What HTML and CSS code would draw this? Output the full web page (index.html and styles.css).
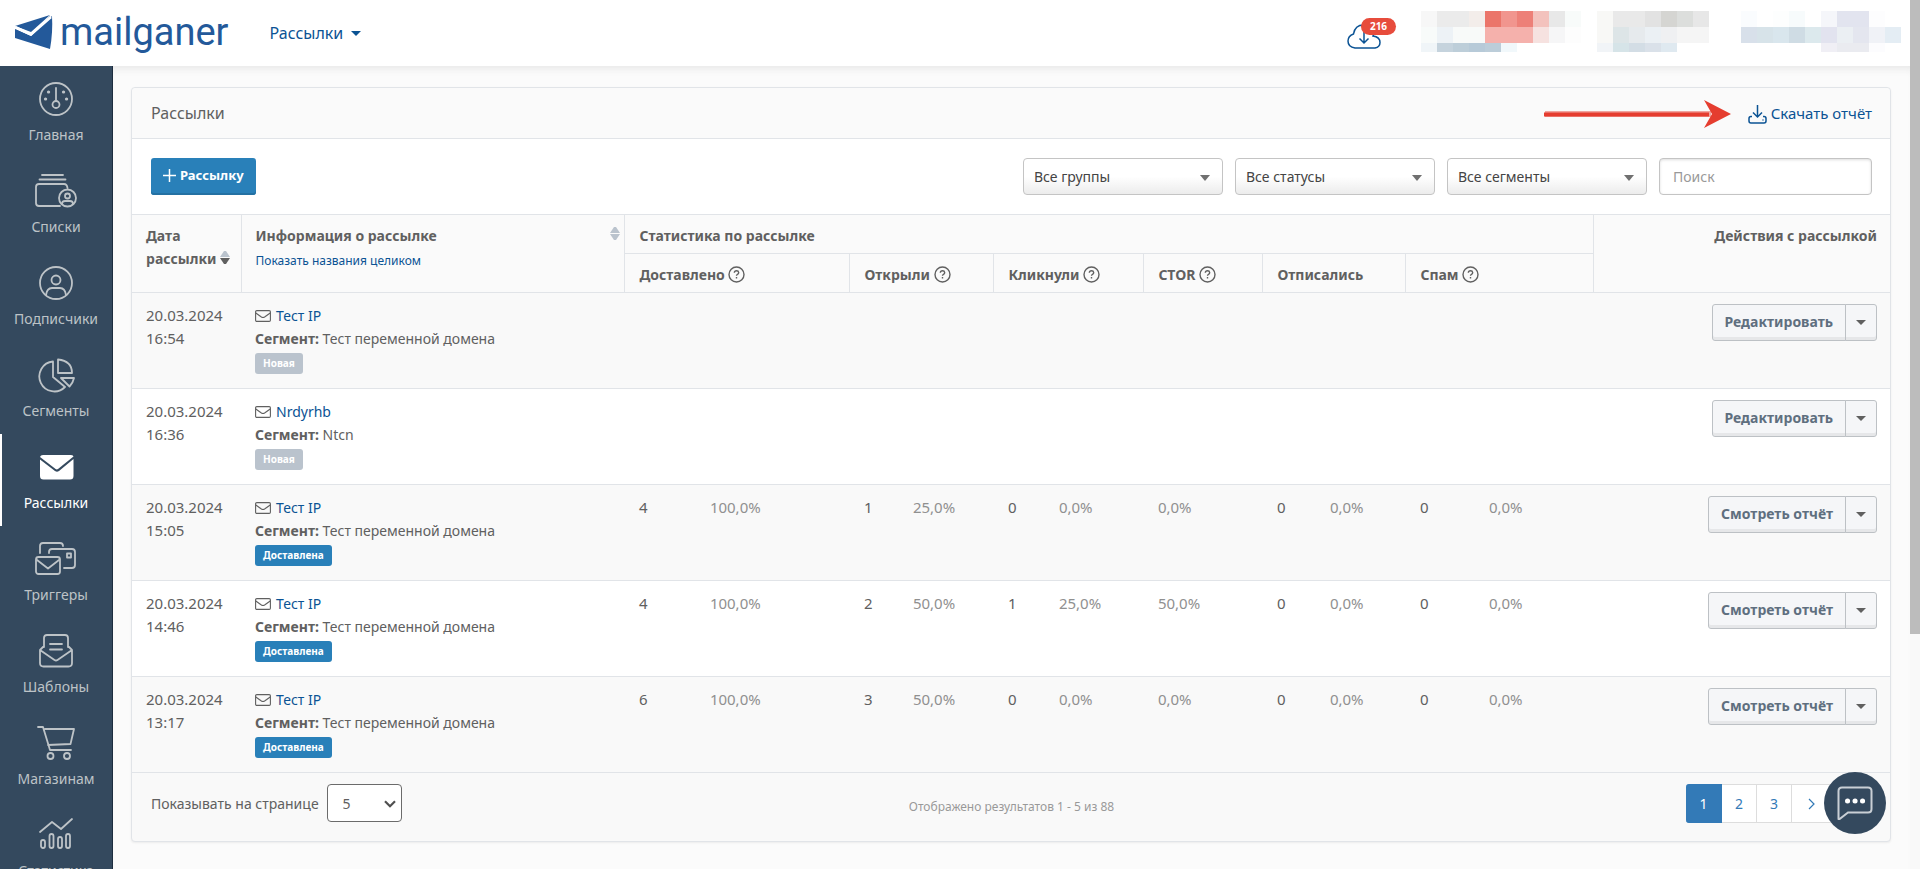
FILE: index.html
```html
<!DOCTYPE html>
<html lang="ru">
<head>
<meta charset="utf-8">
<title>Рассылки — mailganer</title>
<link rel="stylesheet" href="styles.css">
</head>
<body>
<svg class="sprite" aria-hidden="true">
  <symbol id="i-mail" viewBox="0 0 16 12"><rect x=".6" y=".6" width="14.8" height="10.8" rx="1.2"/><path d="M.8 3l5.600 4q1.600 1 3.200 0L15.200 3"/></symbol>
  <symbol id="i-help" viewBox="0 0 17 17"><circle cx="8.500" cy="8.500" r="7.500"/><path d="M6.300 6.700q.2-2 2.200-2t2.200 1.800q0 1.200-1.200 1.800-1 .5-1 1.500M8.500 11v1.500"/></symbol>
  <symbol id="i-caret" viewBox="0 0 10 5"><path d="M0 0h10L5 5z"/></symbol>
</svg>
<div class="page">
  <header class="topbar">
    <a class="logo" href="#">
      <svg class="logo-mark" viewBox="0 0 38 34"><path fill="#23599a" d="M0 11L35 0 16 17z"/><path fill="#1b4376" d="M0 14l16 8L35 1l1 6-19 21z"/><path fill="#23599a" d="M0 14l16 7L37 1q1 16-2 33L0 23z"/><path fill="none" stroke="#fff" stroke-width="2.500" d="M0 12l16 7.500L36 2"/></svg>
      <span>mailganer</span>
    </a>
    <button class="nav-menu" type="button">Рассылки <svg><use href="#i-caret"/></svg></button>
    <div class="top-right">
      <a class="downloads" href="#" aria-label="Загрузки">
        <svg viewBox="0 0 34 26"><path d="M8 24q-7-1-7-7 0-5 5.500-7Q8 1 16.500 1q8 0 10 8 0 2-.5 3 7 1 7 6.500 0 4.500-5 5.500zM17 8v11M12.500 14.500L17 19l4.500-4.500"/></svg>
        <span class="count">216</span>
      </a>
      <svg class="mosaic mosaic-a" viewBox="0 0 160 41" shape-rendering="crispEdges"><path fill="#f7f7f7" d="M0 0h16v16H0z"/><path fill="#ebebeb" d="M16 0h32v16H16z"/><path fill="#f3edea" d="M48 0h16v16H48z"/><path fill="#eb756a" d="M64 0h16v16H64z"/><path fill="#f1958e" d="M80 0h16v16H80z"/><path fill="#ed8078" d="M96 0h16v16H96z"/><path fill="#f3c2bd" d="M112 0h16v16h-16z"/><path fill="#e8e8e8" d="M128 0h16v16h-16z"/><path fill="#f8fbfa" d="M144 0h16v16h-16zM0 16h16v16H0z"/><path fill="#edf2f6" d="M16 16h16v16H16z"/><path fill="#f8faf9" d="M32 16h32v16H32z"/><path fill="#f5b1ac" d="M64 16h48v16H64z"/><path fill="#f6e2e0" d="M112 16h16v16h-16z"/><path fill="#f6f6f7" d="M128 16h16v16h-16z"/><path fill="#fdfdfd" d="M144 16h16v16h-16z"/><path fill="#f0f5f8" d="M0 32h16v9H0z"/><path fill="#c5d3dd" d="M16 32h16v9H16z"/><path fill="#bdced9" d="M32 32h16v9H32z"/><path fill="#b7cad8" d="M48 32h16v9H48z"/><path fill="#bccdd9" d="M64 32h16v9H64z"/><path fill="#f1f8fb" d="M80 32h16v9H80z"/></svg>
      <svg class="mosaic mosaic-b" viewBox="0 0 112 41" shape-rendering="crispEdges"><path fill="#f8f8f6" d="M0 0h16v32H0z"/><path fill="#e9e9e9" d="M16 0h32v16H16z"/><path fill="#e2e2e2" d="M48 0h16v16H48z"/><path fill="#d5d5d2" d="M64 0h16v16H64z"/><path fill="#dcdedc" d="M80 0h16v16H80z"/><path fill="#e7e7e7" d="M96 0h16v16H96z"/><path fill="#dde5e7" d="M16 16h16v16H16z"/><path fill="#e6eaed" d="M32 16h16v16H32z"/><path fill="#ebf0f4" d="M48 16h16v16H48z"/><path fill="#eff0f2" d="M64 16h16v16H64z"/><path fill="#f5f5f5" d="M80 16h32v16H80z"/><path fill="#f1f4f7" d="M0 32h16v9H0z"/><path fill="#d6e4e8" d="M16 32h16v9H16z"/><path fill="#d3dde5" d="M32 32h16v9H32z"/><path fill="#dae1e9" d="M48 32h16v9H48z"/><path fill="#dfe9f0" d="M64 32h16v9H64z"/></svg>
      <svg class="mosaic mosaic-c" viewBox="0 0 160 41" shape-rendering="crispEdges"><path fill="#fafcfe" d="M0 0h16v16H0z"/><path fill="#fdfefe" d="M32 0h16v16H32z"/><path fill="#f7fbfc" d="M48 0h16v16H48z"/><path fill="#f5f6fa" d="M80 0h16v16H80z"/><path fill="#e2e4ef" d="M96 0h32v16H96z"/><path fill="#fdfdfe" d="M128 0h16v16h-16z"/><path fill="#d8e0ea" d="M0 16h16v16H0z"/><path fill="#d7e3e9" d="M16 16h16v16H16z"/><path fill="#d9e6ed" d="M32 16h16v16H32z"/><path fill="#cfdce4" d="M48 16h16v16H48z"/><path fill="#dce9ed" d="M64 16h16v16H64z"/><path fill="#e2e3ef" d="M80 16h16v16H80z"/><path fill="#ebeff3" d="M96 16h16v16H96z"/><path fill="#e4e6ef" d="M112 16h16v16h-16z"/><path fill="#f0f2f7" d="M128 16h16v16h-16z"/><path fill="#e4edf4" d="M144 16h16v16h-16z"/><path fill="#f0eff5" d="M80 32h16v9H80z"/><path fill="#eaebf0" d="M96 32h32v9H96z"/><path fill="#fcfcfe" d="M128 32h16v9h-16z"/></svg>
    </div>
  </header>
  <div class="body">
    <nav class="sidebar">
      <a class="side-item" href="#"><svg viewBox="0 0 42 36"><circle cx="21" cy="18" r="16"/><path d="M21 7v12"/><circle cx="21" cy="23.500" r="3.500"/><path class="dot" d="M13.500 11h.1M28.500 11h.1M10.500 18h.1M31.500 18h.1"/></svg>Главная</a>
      <a class="side-item" href="#"><svg viewBox="0 0 42 36"><path d="M7 2h21M4.500 6.500h26M25 33H4q-3 0-3-3V14q0-3 3-3h25q3 0 3.500 4"/><circle cx="32.500" cy="25" r="8.500"/><circle cx="32.500" cy="23" r="2.500"/><path d="M27 31q0-3 3-3h5q3 0 3 3"/></svg>Списки</a>
      <a class="side-item" href="#"><svg viewBox="0 0 42 36"><circle cx="21" cy="18" r="16"/><circle cx="21" cy="15" r="4.500"/><path d="M11 30q1-7 6-7h8q5 0 6 7"/></svg>Подписчики</a>
      <a class="side-item" href="#"><svg viewBox="0 0 42 36"><path d="M18 4.500A15 15 0 1 0 30 30L18 20zM23 2.500V16h14Q37 4 23 2.500zM26 21h13q-1 5-4.500 8.500z"/></svg>Сегменты</a>
      <a class="side-item active" href="#"><svg viewBox="0 0 42 36"><path class="solid" d="M8 6h28q2.500 0 2.500 1.500L23 20q-1.200.8-2.400 0L5 8q.5-2 3-2z"/><path class="solid" d="M5 10.500L20 22q2 1.500 4 0L38.500 10v17q0 3.500-3.500 3.500H8.500Q5 30.500 5 27z"/></svg>Рассылки</a>
      <a class="side-item" href="#"><svg viewBox="0 0 42 36"><rect x="1" y="16" width="24" height="17" rx="2.500"/><path d="M2 19l11 8.500L24 19M5 12V5q0-3 3-3h17q3 0 3 3M14 12v-1q0-3 3-3h20q3 0 3 3v13q0 3-3 3h-8M32 12.500h4v4h-4z"/></svg>Триггеры</a>
      <a class="side-item" href="#"><svg viewBox="0 0 42 36"><path d="M9 14V5q0-3 3-3h18q3 0 3 3v9M15 11h12M15 16.500h12M5 17v13q0 3.500 3.500 3.500h25q3.500 0 3.500-3.500V17L22.500 27q-1.500 1-3 0zM5 17l4-4M37 17l-4-4"/></svg>Шаблоны</a>
      <a class="side-item" href="#"><svg viewBox="0 0 42 36"><path d="M3 2h5l7 23h21M10 4h29l-3.500 15L13 20"/><circle cx="15.500" cy="31" r="3"/><circle cx="32" cy="31" r="3"/></svg>Магазинам</a>
      <a class="side-item" href="#"><svg viewBox="0 0 42 36"><path d="M5 15L17 5l9 7L37 2"/><rect x="6" y="23" width="4" height="8" rx="2"/><rect x="14.500" y="17" width="4" height="14" rx="2"/><rect x="23" y="20" width="4" height="11" rx="2"/><rect x="31" y="17" width="4" height="14" rx="2"/></svg>Статистика</a>
    </nav>
    <main class="content">
      <section class="panel">
        <div class="panel-head">
          <h1>Рассылки</h1>
          <svg class="pointer" viewBox="0 0 188 30"><path fill="#f0a49e" d="M2 12h166v6H2z"/><path fill="#e53d2f" d="M1 13.500h165v4H1z"/><path fill="#e53d2f" d="M161 1l27 14-27 14 8-14z"/></svg>
          <a class="report-link" href="#"><svg viewBox="0 0 19 20"><path d="M9.500 1v12M5 8.500L9.500 13 14 8.500M4 12.500H3q-2 0-2 2V17q0 2 2 2h13q2 0 2-2v-2.500q0-2-2-2h-1M14.500 16h1"/></svg>Скачать отчёт</a>
        </div>
        <div class="toolbar">
          <button class="btn-primary" type="button"><svg viewBox="0 0 13 13"><path d="M6.500 0v13M0 6.500h13"/></svg>Рассылку</button>
          <div class="filters">
            <span class="select-box"><select aria-label="Группы"><option>Все группы</option></select></span>
            <span class="select-box"><select aria-label="Статусы"><option>Все статусы</option></select></span>
            <span class="select-box"><select aria-label="Сегменты"><option>Все сегменты</option></select></span>
            <input class="search" type="text" placeholder="Поиск" aria-label="Поиск">
          </div>
        </div>
        <table class="grid">
          <colgroup><col class="c-date"><col><col class="c-dn"><col class="c-dp"><col class="c-on"><col class="c-op"><col class="c-cn"><col class="c-cp"><col class="c-ctor"><col class="c-un"><col class="c-up"><col class="c-sn"><col class="c-sp"><col class="c-act"></colgroup>
          <thead>
            <tr>
              <th rowspan="2">Дата рассылки <svg class="sort desc" viewBox="0 0 10 13"><path class="up" d="M0 6L4 0h2l4 6z"/><path class="down" d="M0 7h10l-4 6H4z"/></svg></th>
              <th rowspan="2"><div class="th-info"><span>Информация о рассылке</span><svg class="sort" viewBox="0 0 10 13"><path class="up" d="M0 6L4 0h2l4 6z"/><path class="down" d="M0 7h10l-4 6H4z"/></svg></div><a class="small-link" href="#">Показать названия целиком</a></th>
              <th colspan="11">Статистика по рассылке</th>
              <th rowspan="2" class="right">Действия с рассылкой</th>
            </tr>
            <tr>
              <th colspan="2">Доставлено <svg class="help"><use href="#i-help"/></svg></th>
              <th colspan="2">Открыли <svg class="help"><use href="#i-help"/></svg></th>
              <th colspan="2">Кликнули <svg class="help"><use href="#i-help"/></svg></th>
              <th>CTOR <svg class="help"><use href="#i-help"/></svg></th>
              <th colspan="2">Отписались</th>
              <th colspan="2">Спам <svg class="help"><use href="#i-help"/></svg></th>
            </tr>
          </thead>
          <tbody>
            <tr>
              <td>20.03.2024 16:54</td>
              <td class="info"><svg class="mail"><use href="#i-mail"/></svg><a href="#">Тест IP</a><div><b>Сегмент:</b> Тест переменной домена</div><span class="tag">Новая</span></td>
              <td></td><td></td><td></td><td></td><td></td><td></td><td></td><td></td><td></td><td></td><td></td>
              <td class="right"><div class="split"><button type="button">Редактировать</button><button type="button" aria-label="Ещё"><svg><use href="#i-caret"/></svg></button></div></td>
            </tr>
            <tr>
              <td>20.03.2024 16:36</td>
              <td class="info"><svg class="mail"><use href="#i-mail"/></svg><a href="#">Nrdyrhb</a><div><b>Сегмент:</b> Ntcn</div><span class="tag">Новая</span></td>
              <td></td><td></td><td></td><td></td><td></td><td></td><td></td><td></td><td></td><td></td><td></td>
              <td class="right"><div class="split"><button type="button">Редактировать</button><button type="button" aria-label="Ещё"><svg><use href="#i-caret"/></svg></button></div></td>
            </tr>
            <tr>
              <td>20.03.2024 15:05</td>
              <td class="info"><svg class="mail"><use href="#i-mail"/></svg><a href="#">Тест IP</a><div><b>Сегмент:</b> Тест переменной домена</div><span class="tag done">Доставлена</span></td>
              <td>4</td><td class="pct">100,0%</td><td>1</td><td class="pct">25,0%</td><td>0</td><td class="pct">0,0%</td><td class="pct">0,0%</td><td>0</td><td class="pct">0,0%</td><td>0</td><td class="pct">0,0%</td>
              <td class="right"><div class="split"><button type="button">Смотреть отчёт</button><button type="button" aria-label="Ещё"><svg><use href="#i-caret"/></svg></button></div></td>
            </tr>
            <tr>
              <td>20.03.2024 14:46</td>
              <td class="info"><svg class="mail"><use href="#i-mail"/></svg><a href="#">Тест IP</a><div><b>Сегмент:</b> Тест переменной домена</div><span class="tag done">Доставлена</span></td>
              <td>4</td><td class="pct">100,0%</td><td>2</td><td class="pct">50,0%</td><td>1</td><td class="pct">25,0%</td><td class="pct">50,0%</td><td>0</td><td class="pct">0,0%</td><td>0</td><td class="pct">0,0%</td>
              <td class="right"><div class="split"><button type="button">Смотреть отчёт</button><button type="button" aria-label="Ещё"><svg><use href="#i-caret"/></svg></button></div></td>
            </tr>
            <tr>
              <td>20.03.2024 13:17</td>
              <td class="info"><svg class="mail"><use href="#i-mail"/></svg><a href="#">Тест IP</a><div><b>Сегмент:</b> Тест переменной домена</div><span class="tag done">Доставлена</span></td>
              <td>6</td><td class="pct">100,0%</td><td>3</td><td class="pct">50,0%</td><td>0</td><td class="pct">0,0%</td><td class="pct">0,0%</td><td>0</td><td class="pct">0,0%</td><td>0</td><td class="pct">0,0%</td>
              <td class="right"><div class="split"><button type="button">Смотреть отчёт</button><button type="button" aria-label="Ещё"><svg><use href="#i-caret"/></svg></button></div></td>
            </tr>
          </tbody>
        </table>
        <footer class="panel-foot">
          <div class="per-page"><label for="per-page">Показывать на странице</label><span class="per-box"><select id="per-page"><option>5</option></select><svg viewBox="0 0 12 8"><path d="M1 1.200l5 5 5-5"/></svg></span></div>
          <p class="summary">Отображено результатов 1 - 5 из 88</p>
          <nav class="pager" aria-label="Страницы"><a class="current" href="#">1</a><a href="#">2</a><a href="#">3</a><a class="wide" href="#" aria-label="Следующая"><svg viewBox="0 0 7 12"><path d="M1 1l5 5-5 5"/></svg></a><a class="wide" href="#" aria-label="Последняя"></a></nav>
        </footer>
      </section>
    </main>
  </div>
</div>
<div class="scrollbar" aria-hidden="true"></div>
<button class="chat" type="button" aria-label="Чат"><svg viewBox="0 0 36 34"><path d="M5 1.500h26q3.500 0 3.500 3.500v18q0 3.500-3.500 3.500H11L2 33.500q-.5 0-.5-1V5q0-3.500 3.500-3.500z"/><path class="dots" d="M10.500 15h.1M18 15h.1M25.500 15h.1"/></svg></button>
</body>
</html>
```
FILE: styles.css
```css
* { box-sizing: border-box; }
html, body { height: 100%; }
body {
  margin: 0;
  display: flex;
  overflow: hidden;
  background: #fbfbfb;
  color: #606060;
  font: 15px/23px "Noto Sans", sans-serif;
}
button, input, select { font: inherit; color: inherit; margin: 0; }
a { color: #0b5394; text-decoration: none; }
svg { flex: none; }
.sprite { position: absolute; width: 0; height: 0; }

.page { flex: 1; min-width: 0; display: flex; flex-direction: column; }

.topbar {
  position: relative;
  z-index: 1;
  flex: none;
  display: flex;
  height: 66px;
  padding-left: 15px;
  background: #fff;
}
.logo { display: flex; gap: 7px; align-items: center; height: 64px; color: #23599a; font: 38px/48px Roboto, sans-serif; }
.logo-mark { width: 38px; height: 34px; }
.nav-menu {
  display: flex;
  gap: 8px;
  align-items: center;
  margin-left: 41px;
  padding: 0;
  border: 0;
  background: none;
  color: #0b5394;
  font-size: 16px;
}
.nav-menu svg { width: 10px; height: 5px; fill: #0b5394; }
.top-right { display: flex; margin-left: auto; padding-right: 9px; }
.downloads { position: relative; margin: 24px 40px 0 0; }
.downloads svg { display: block; width: 34px; height: 26px; fill: none; stroke: #0b5394; stroke-width: 1.5; }
.count {
  position: absolute;
  left: 14px;
  top: -6px;
  width: 35px;
  border-radius: 9px;
  background: #e74c3c;
  color: #fff;
  font-size: 10px;
  font-weight: bold;
  line-height: 17px;
  text-align: center;
}
.mosaic { height: 41px; margin-top: 11px; }
.mosaic-a, .mosaic-c { width: 160px; }
.mosaic-b { width: 112px; margin: 11px 32px 0 16px; }

.body { flex: 1; min-height: 0; display: flex; }
.sidebar {
  flex: none;
  width: 113px;
  overflow: hidden;
  position: relative;
  z-index: 2;
  background: #34495e;
  border-right: 1px solid #1d2d3f;
}
.side-item {
  display: flex;
  flex-direction: column;
  align-items: center;
  gap: 8px;
  height: 92px;
  padding-top: 15px;
  color: #bdc3c7;
  font-size: 14px;
  line-height: 20px;
}
.side-item svg { width: 42px; height: 36px; fill: none; stroke: #bdc3c7; stroke-width: 1.8; stroke-linecap: round; stroke-linejoin: round; }
.side-item .dot { stroke-width: 3.2; }
.side-item .solid { fill: #fff; stroke: none; }
.side-item.active { color: #fff; box-shadow: inset 2px 0 #fff; }

.content { flex: 1; min-width: 0; padding: 21px 19px 0 18px; box-shadow: inset 0 8px 8px -6px #e4e4e4; }
.panel { border: 1px solid #e1e4e8; border-radius: 4px; background: #f9f9f9; box-shadow: 0 1px 2px #ececec; }
.panel-head { display: flex; align-items: center; height: 51px; padding: 1px 18px 0 19px; border-bottom: 1px solid #e1e4e8; background: #fafafa; border-radius: 4px 4px 0 0; }
.panel-head h1 { margin: 0; font-size: 16px; font-weight: normal; }
.pointer { width: 188px; height: 30px; margin: 0 17px 0 auto; }
.report-link { display: flex; gap: 4px; align-items: center; }
.report-link svg { width: 19px; height: 20px; fill: none; stroke: #0b5394; stroke-width: 1.5; }
.toolbar { display: flex; justify-content: space-between; padding: 19px 18px 19px 19px; background: #fff; }
.btn-primary {
  display: flex;
  gap: 4px;
  align-items: center;
  height: 37px;
  padding: 0 12px 2px;
  border: 0;
  border-radius: 3px;
  background: #2980b9;
  box-shadow: inset 0 -2px #2471a3;
  color: #fff;
  font-size: 13px;
  font-weight: bold;
}
.btn-primary svg { width: 13px; height: 13px; stroke: #fff; stroke-width: 1.5; }
.filters { display: flex; gap: 12px; font-size: 14px; }
.select-box { position: relative; display: block; width: 200px; }
.select-box select, .search {
  width: 100%;
  height: 37px;
  padding: 0 10px;
  border: 1px solid #c4c4c4;
  border-radius: 4px;
  color: #444;
}
.select-box select { appearance: none; background: linear-gradient(#fff 50%, #ececec); }
.select-box::after {
  content: "";
  position: absolute;
  right: 13px;
  top: 17px;
  border: 5px solid transparent;
  border-top: 6px solid #707070;
  border-bottom: 0;
}
.filters .search { width: 213px; padding: 0 13px; background: #fff; box-shadow: inset 0 1px 3px #ddd; }
.search::placeholder { color: #999; opacity: 1; }

.grid { width: 100%; table-layout: fixed; border-collapse: collapse; }
.c-date { width: 109px; }
.c-dn { width: 71px; } .c-dp { width: 154px; }
.c-on { width: 49px; } .c-op { width: 95px; }
.c-cn { width: 51px; } .c-cp { width: 99px; }
.c-ctor { width: 119px; }
.c-un { width: 53px; } .c-up { width: 90px; }
.c-sn { width: 69px; } .c-sp { width: 118px; }
.c-act { width: 297px; }
.grid th, .grid td { padding: 11px 0 0 14px; text-align: left; vertical-align: top; }
.grid th { height: 39px; border: 1px solid #e1e4e8; background: #fafafa; font-size: 14px; padding-top: 9px; }
.grid th:first-child { border-left: 0; }
.grid thead tr + tr th:first-child { border-left: 1px solid #e1e4e8; }
.grid th.right { border-right: 0; }
.grid th.right, .grid td.right { text-align: right; padding-right: 13px; }
.grid td { height: 96px; border-bottom: 1px solid #e1e4e8; }
.grid td.info { font-size: 14px; }
.grid tbody tr { background: #f9f9f9; }
.grid tbody tr:nth-child(even) { background: #fff; }
.th-info { display: flex; justify-content: space-between; padding-right: 4px; }
.small-link { display: block; font-size: 12px; font-weight: normal; line-height: 28px; }
.sort { width: 10px; height: 13px; fill: #bac3cd; }
.th-info .sort { margin-top: 3px; }
.sort.desc .down { fill: #606060; }
.help { width: 17px; height: 17px; vertical-align: -3px; fill: none; stroke: #606060; stroke-width: 1.4; }
.mail { width: 16px; height: 12px; margin-right: 5px; vertical-align: -1px; fill: none; stroke: #606060; stroke-width: 1.1; }
.pct { color: #909090; }
.tag {
  display: block;
  width: fit-content;
  margin-top: 3px;
  padding: 0 8px;
  border-radius: 3px;
  background: #bac3cd;
  color: #fff;
  font-size: 10px;
  font-weight: bold;
  line-height: 21px;
}
.tag.done { background: #2980b9; }
.split { display: inline-flex; }
.split button {
  height: 37px;
  padding: 0 12px 2px;
  border: 1px solid #bdc1c5;
  border-radius: 3px 0 0 3px;
  background: #f5f6f8;
  box-shadow: inset 0 -3px #e6e7e9;
  color: #5f6f7f;
  font-size: 14px;
  font-weight: bold;
}
.split button + button { width: 32px; margin-left: -1px; padding: 0; border-radius: 0 3px 3px 0; }
.split svg { display: block; width: 10px; height: 5px; margin: 0 auto; fill: #606060; }

.panel-foot { display: grid; grid-template-columns: 1fr auto 1fr; align-items: start; padding: 11px 18px 18px 19px; }
.per-page { display: flex; gap: 8px; align-items: center; font-size: 14px; }
.per-box { position: relative; }
.per-box select { appearance: none; display: block; width: 75px; height: 38px; padding: 0 15px; border: 1px solid #6b6b6b; border-radius: 4px; background: #fff; }
.per-box svg { position: absolute; right: 6px; top: 16px; width: 12px; height: 8px; fill: none; stroke: #505050; stroke-width: 2.2; }
.summary { margin: 11px 0 0; color: #999; font-size: 12px; }
.pager { display: flex; justify-self: end; }
.pager a { display: flex; align-items: center; justify-content: center; width: 35px; height: 39px; border: 1px solid #ddd; border-left: 0; background: #fff; color: #337ab7; font-size: 14px; }
.pager .current { width: 36px; border-color: #337ab7; border-radius: 3px 0 0 3px; background: #337ab7; color: #fff; }
.pager .wide { width: 40px; }
.pager svg { width: 7px; height: 12px; fill: none; stroke: #337ab7; stroke-width: 1.2; }

.scrollbar { flex: none; width: 10px; background: linear-gradient(#bcbcbc, #bcbcbc) top / 100% 73% no-repeat #f9f9f9; }
.chat {
  position: fixed;
  right: 34px;
  bottom: 35px;
  z-index: 3;
  display: flex;
  align-items: center;
  justify-content: center;
  width: 62px;
  height: 62px;
  padding: 0;
  border: 0;
  border-radius: 50%;
  background: #34495e;
}
.chat svg { width: 36px; height: 34px; fill: none; stroke: #c9cfd5; stroke-width: 2; }
.chat .dots { stroke: #fff; stroke-width: 5; stroke-linecap: round; }
```
